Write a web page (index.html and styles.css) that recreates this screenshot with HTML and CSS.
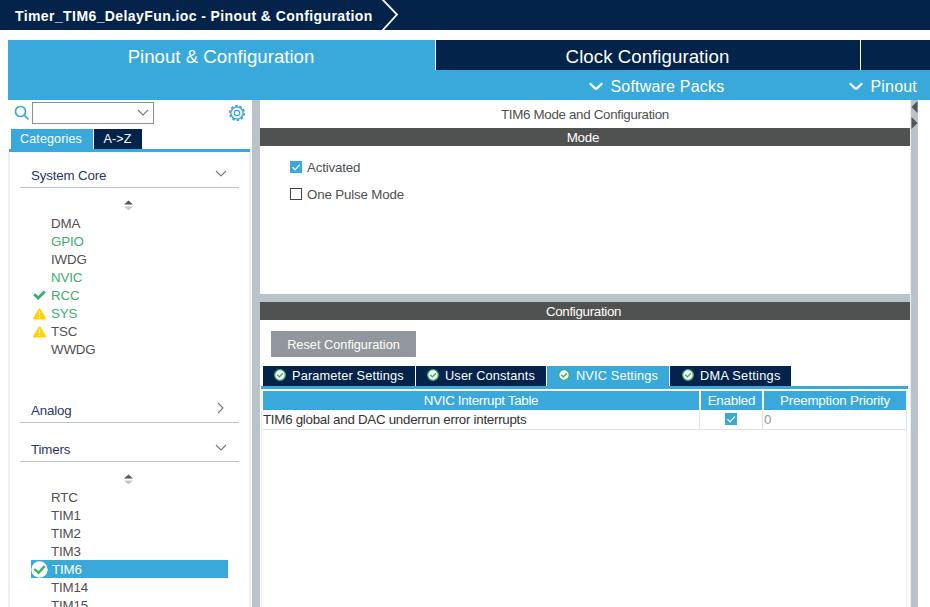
FILE: index.html
```html
<!DOCTYPE html>
<html lang="en">
<head>
<meta charset="utf-8">
<title>Pinout &amp; Configuration</title>
<link rel="stylesheet" href="styles.css">
</head>
<body>
<svg class="defs" width="0" height="0">
  <symbol id="down" viewBox="0 0 12 8"><path d="M1 1l5 5 5-5" fill="none" stroke="#777" stroke-width="1.1"/></symbol>
  <symbol id="menu" viewBox="0 0 14 9"><path d="M.8 1.300L6 6.300q1 .8 2 0l5.200-5" fill="none" stroke="#fff" stroke-width="2.200"/></symbol>
  <symbol id="sort" viewBox="0 0 9 11"><path d="M0 4.500L4.500.5 9 4.500z" fill="#555"/><path d="M0 6.500h9l-4.500 4z" fill="#c8c8c8"/></symbol>
  <symbol id="warn" viewBox="0 0 13 12"><path d="M5.500 1q1-1 2 0L12.800 10q.2 1.500-.8 1.500H1Q0 11.500.2 10z" fill="#ffd200"/><path d="M6.500 3.500v4M6.500 8.800v1.200" stroke="#fff" stroke-width="1.200"/></symbol>
  <symbol id="ok" viewBox="0 0 12 12"><circle cx="6" cy="6" r="5.300" fill="#fff" stroke="#3cae6c" stroke-width="1.300"/><path d="M3.300 5.800l2 2.200 3.500-3.700" fill="none" stroke="#3cae6c" stroke-width="1.500"/></symbol>
  <symbol id="box" viewBox="0 0 12 12"><path d="M0 0h12v12H0z" fill="#39a9dc"/><path d="M2.500 6.200l2.600 2.700 4.700-5.300" fill="none" stroke="#fff" stroke-width="1.300"/></symbol>
</svg>

<header class="crumbs">
  <span class="crumb">Timer_TIM6_DelayFun.ioc - Pinout &amp; Configuration</span>
  <svg class="crumb-arrow" width="18" height="30" viewBox="0 0 18 30"><path d="M1-1l15 15.500L1 31" fill="none" stroke="#fff" stroke-width="1.800"/></svg>
</header>

<nav class="views">
  <div class="view active">Pinout &amp; Configuration</div>
  <div class="view clock">Clock Configuration</div>
  <div class="view rest"></div>
</nav>
<div class="menus">
  <div class="menu packs"><svg width="14" height="9"><use href="#menu"/></svg><span>Software Packs</span></div>
  <div class="menu"><svg width="14" height="9"><use href="#menu"/></svg><span>Pinout</span></div>
</div>

<main class="workspace">
  <aside class="sidebar">
    <div class="search">
      <svg class="lens" width="16" height="16" viewBox="0 0 16 16"><circle cx="6.500" cy="6.500" r="5" fill="none" stroke="#39a9dc" stroke-width="1.700"/><path d="M10 10l4.500 4.500" stroke="#39a9dc" stroke-width="1.700"/></svg>
      <div class="combo"><svg width="12" height="8"><use href="#down"/></svg></div>
      <svg class="gear" width="18" height="18" viewBox="0 0 18 18" fill="none" stroke="#39a9dc"><circle cx="9" cy="9" r="7.200" stroke-width="1.700" stroke-dasharray="2.700 1.824"/><circle cx="9" cy="9" r="6.100" stroke-width="1.300"/><circle cx="9" cy="9" r="2.700" stroke-width="1.300"/></svg>
    </div>
    <div class="side-tabs"><span class="side-tab current">Categories</span><span class="side-tab">A-&gt;Z</span></div>
    <div class="tree">
      <div class="group"><span>System Core</span><svg width="12" height="8"><use href="#down"/></svg></div>
      <svg class="sort" width="9" height="11"><use href="#sort"/></svg>
      <ul class="core">
        <li>DMA</li>
        <li class="on">GPIO</li>
        <li>IWDG</li>
        <li class="on">NVIC</li>
        <li class="on"><svg width="13" height="10" viewBox="0 0 13 10"><path d="M1.200 4.200l4 3.800L11.800 1.500" fill="none" stroke="#3cae6c" stroke-width="2.800"/></svg>RCC</li>
        <li class="on"><svg width="13" height="12"><use href="#warn"/></svg>SYS</li>
        <li><svg width="13" height="12"><use href="#warn"/></svg>TSC</li>
        <li>WWDG</li>
      </ul>
      <div class="group analog"><span>Analog</span><svg width="8" height="12" viewBox="0 0 8 12"><path d="M1 1l5 5-5 5" fill="none" stroke="#777" stroke-width="1.100"/></svg></div>
      <div class="group timer"><span>Timers</span><svg width="12" height="8"><use href="#down"/></svg></div>
      <svg class="sort" width="9" height="11"><use href="#sort"/></svg>
      <ul>
        <li>RTC</li>
        <li>TIM1</li>
        <li>TIM2</li>
        <li>TIM3</li>
        <li class="selected"><svg width="17" height="17" viewBox="0 0 17 17"><circle cx="8.500" cy="8.500" r="8.200" fill="#fff"/><path d="M3.500 8l4 3.800L13.700 5" fill="none" stroke="#3cae6c" stroke-width="2.400"/></svg>TIM6</li>
        <li>TIM14</li>
        <li>TIM15</li>
      </ul>
    </div>
  </aside>

  <section class="center">
    <div class="mode-title">TIM6 Mode and Configuration</div>
    <div class="bar">Mode</div>
    <div class="mode">
      <div class="check"><svg width="12" height="12"><use href="#box"/></svg>Activated</div>
      <div class="check"><i class="empty"></i>One Pulse Mode</div>
    </div>
    <div class="split"></div>
    <div class="bar config">Configuration</div>
    <div class="panel">
      <button class="reset">Reset Configuration</button>
      <div class="tabs">
        <span class="tab param"><svg width="12" height="12"><use href="#ok"/></svg>Parameter Settings</span>
        <span class="tab user"><svg width="12" height="12"><use href="#ok"/></svg>User Constants</span>
        <span class="tab nvic"><svg width="12" height="12"><use href="#ok"/></svg>NVIC Settings</span>
        <span class="tab dma"><svg width="12" height="12"><use href="#ok"/></svg>DMA Settings</span>
      </div>
      <div class="table">
        <div class="row head"><span class="h-name">NVIC Interrupt Table</span><span>Enabled</span><span>Preemption Priority</span></div>
        <div class="row"><span class="name">TIM6 global and DAC underrun error interrupts</span><span class="enabled"><svg width="12" height="12"><use href="#box"/></svg></span><span class="priority">0</span></div>
      </div>
    </div>
  </section>

  <div class="gutter">
    <svg width="7" height="30" viewBox="0 0 7 30" fill="#555"><path d="M6.500 1v12L.5 7zM.5 17v12l6-6z"/></svg>
  </div>
</main>
</body>
</html>
```
FILE: styles.css
```css
* { box-sizing: border-box; }
body {
  margin: 0;
  width: 930px;
  height: 607px;
  overflow: hidden;
  display: flex;
  flex-direction: column;
  background: #fff;
  color: #505050;
  font: 13.33px/18px "Liberation Sans", Arial, sans-serif;
  letter-spacing: -0.17px;
}
svg { display: block; flex: none; }
.defs { position: absolute; }

.crumbs {
  flex: none;
  height: 30px;
  margin-bottom: 10px;
  display: flex;
  align-items: center;
  background: #03234b;
  color: #fff;
}
.crumb {
  width: 366px;
  padding: 2px 0 0 15px;
  margin-right: 15px;
  white-space: nowrap;
  font-size: 14px;
  font-weight: bold;
  letter-spacing: 0.41px;
}

.views { flex: none; display: flex; height: 30px; margin-left: 8px; color: #fff; }
.view {
  padding-top: 2px;
  border-left: 1px solid #fff;
  background: #03234b;
  text-align: center;
  font-size: 18.67px;
  line-height: 29px;
  letter-spacing: 0;
}
.view.active { width: 427px; padding-right: 1px; border: 0; background: #39a9dc; }
.view.clock { width: 425px; padding-right: 1px; letter-spacing: 0.05px; }
.view.rest { flex: 1; }

.menus {
  flex: none;
  height: 30px;
  margin-left: 8px;
  padding: 3px 13px 0 0;
  display: flex;
  justify-content: flex-end;
  align-items: center;
  gap: 125px;
  background: #39a9dc;
  color: #fff;
  font-size: 16px;
  letter-spacing: 0.2px;
}
.menu { display: flex; align-items: center; gap: 7px; }
.menu svg { margin-top: -1px; }

.workspace { flex: 1; min-height: 0; display: flex; margin-left: 8px; }
.sidebar { width: 244px; display: flex; flex-direction: column; }
.search { height: 29px; padding: 0 6px 1px; display: flex; align-items: center; flex: none; }
.lens { margin-top: -2px; }
.combo {
  width: 122px;
  height: 22px;
  margin: -3px 0 0 2px;
  padding: 0 4px;
  display: flex;
  align-items: center;
  justify-content: flex-end;
  border: 1px solid #8b9197;
}
.gear { margin: -3px 0 0 auto; }
.side-tabs {
  flex: none;
  height: 23px;
  margin: 0 2px 0 1px;
  padding-left: 2px;
  display: flex;
  gap: 1px;
  border-bottom: 3px solid #39a9dc;
}
.side-tab {
  width: 48px;
  padding-right: 1px;
  background: #03234b;
  color: #fff;
  text-align: center;
  font-size: 12.5px;
  line-height: 20px;
  letter-spacing: 0.15px;
}
.side-tab.current { width: 82px; padding-right: 2px; background: #39a9dc; }
.tree {
  flex: 1;
  min-height: 0;
  overflow: hidden;
  margin-right: 1px;
  padding: 11px 10px 0;
  border: solid #eee;
  border-width: 0 2px;
}
.group {
  width: 219px;
  height: 25px;
  padding: 4px 12px 0 11px;
  display: flex;
  justify-content: space-between;
  border-bottom: 1px solid #b8c4ca;
  color: #27366b;
}
.group svg { margin-top: 3px; }
.analog { margin-top: 40px; }
.analog svg { margin: 0 2px 0 0; }
.timer { margin-top: 14px; }
.sort { margin: 12px 0 0 104px; }
ul { margin: 3px 0 0 11px; padding: 0; list-style: none; }
li { width: 197px; height: 18px; padding: 1px 0 0 20px; display: flex; align-items: flex-start; line-height: 18px; }
li svg { margin: 3px 5px 0 -18px; }
.on { color: #3cae6c; }
.selected { padding-left: 21px; background: #39a9dc; color: #fff; }
.selected svg { margin: 0 4px 0 -21px; }

.center {
  width: 659px;
  display: flex;
  flex-direction: column;
  border-left: 8px solid #b8c4ca;
  border-right: 1px solid #eee;
}
.mode-title { flex: none; height: 28px; padding-top: 6px; text-align: center; letter-spacing: -0.31px; }
.bar { flex: none; height: 18px; padding-right: 4px; background: #505251; color: #fff; text-align: center; line-height: 19px; }
.config { padding-right: 3px; letter-spacing: -0.31px; }
.mode { flex: none; height: 148px; padding: 12px 30px; }
.check { height: 27px; display: flex; align-items: flex-start; gap: 5px; line-height: 19px; }
.check svg, .empty { margin-top: 3px; }
.empty { width: 12px; height: 12px; border: 1px solid #444; }
.split { flex: none; height: 8px; background: #b8c4ca; }
.panel { flex: 1; min-height: 0; display: flex; flex-direction: column; padding: 11px 2px 0 1px; }
.reset {
  flex: none;
  width: 145px;
  height: 26px;
  margin-left: 10px;
  padding: 2px 0 0;
  border: 0;
  background: #91979c;
  color: #fff;
  font: 12.75px/20px "Liberation Sans", Arial, sans-serif;
  letter-spacing: 0;
}
.tabs { flex: none; height: 23px; margin-top: 9px; padding-left: 2px; display: flex; gap: 1px; border-bottom: 3px solid #39a9dc; }
.tab {
  height: 20px;
  padding-left: 11px;
  display: flex;
  align-items: center;
  gap: 6px;
  white-space: nowrap;
  background: #03234b;
  color: #fff;
  font-size: 12.75px;
  letter-spacing: 0.15px;
}
.tab svg { margin-top: -2px; }
.param { width: 152px; }
.user { width: 130px; }
.nvic { width: 122px; background: #39a9dc; }
.dma { width: 121px; padding-left: 12px; letter-spacing: 0.28px; }
.table { flex: 1; min-height: 0; margin-right: 1px; border-left: 1px solid #eee; border-right: 1px solid #eee; padding: 2px 0 0 1px; }
.row { display: grid; grid-template-columns: 437px 63px 144px; height: 21px; border-bottom: 1px solid #dfe3e8; color: #333; }
.row > span { border-right: 1px solid #dfe3e8; white-space: nowrap; }
.head { height: 18px; border: 0; color: #fff; text-align: center; line-height: 19px; }
.head > span { margin: 0 1px; border: 0; background: #39a9dc; }
.head .h-name { margin-left: 0; letter-spacing: -0.31px; }
.name { letter-spacing: -0.27px; line-height: 21px; }
.enabled { display: flex; justify-content: center; align-items: flex-start; padding-top: 4px; }
.priority { padding-left: 1px; color: #999; line-height: 21px; }

.gutter { width: 7px; background: #b8c4ca; }
```
